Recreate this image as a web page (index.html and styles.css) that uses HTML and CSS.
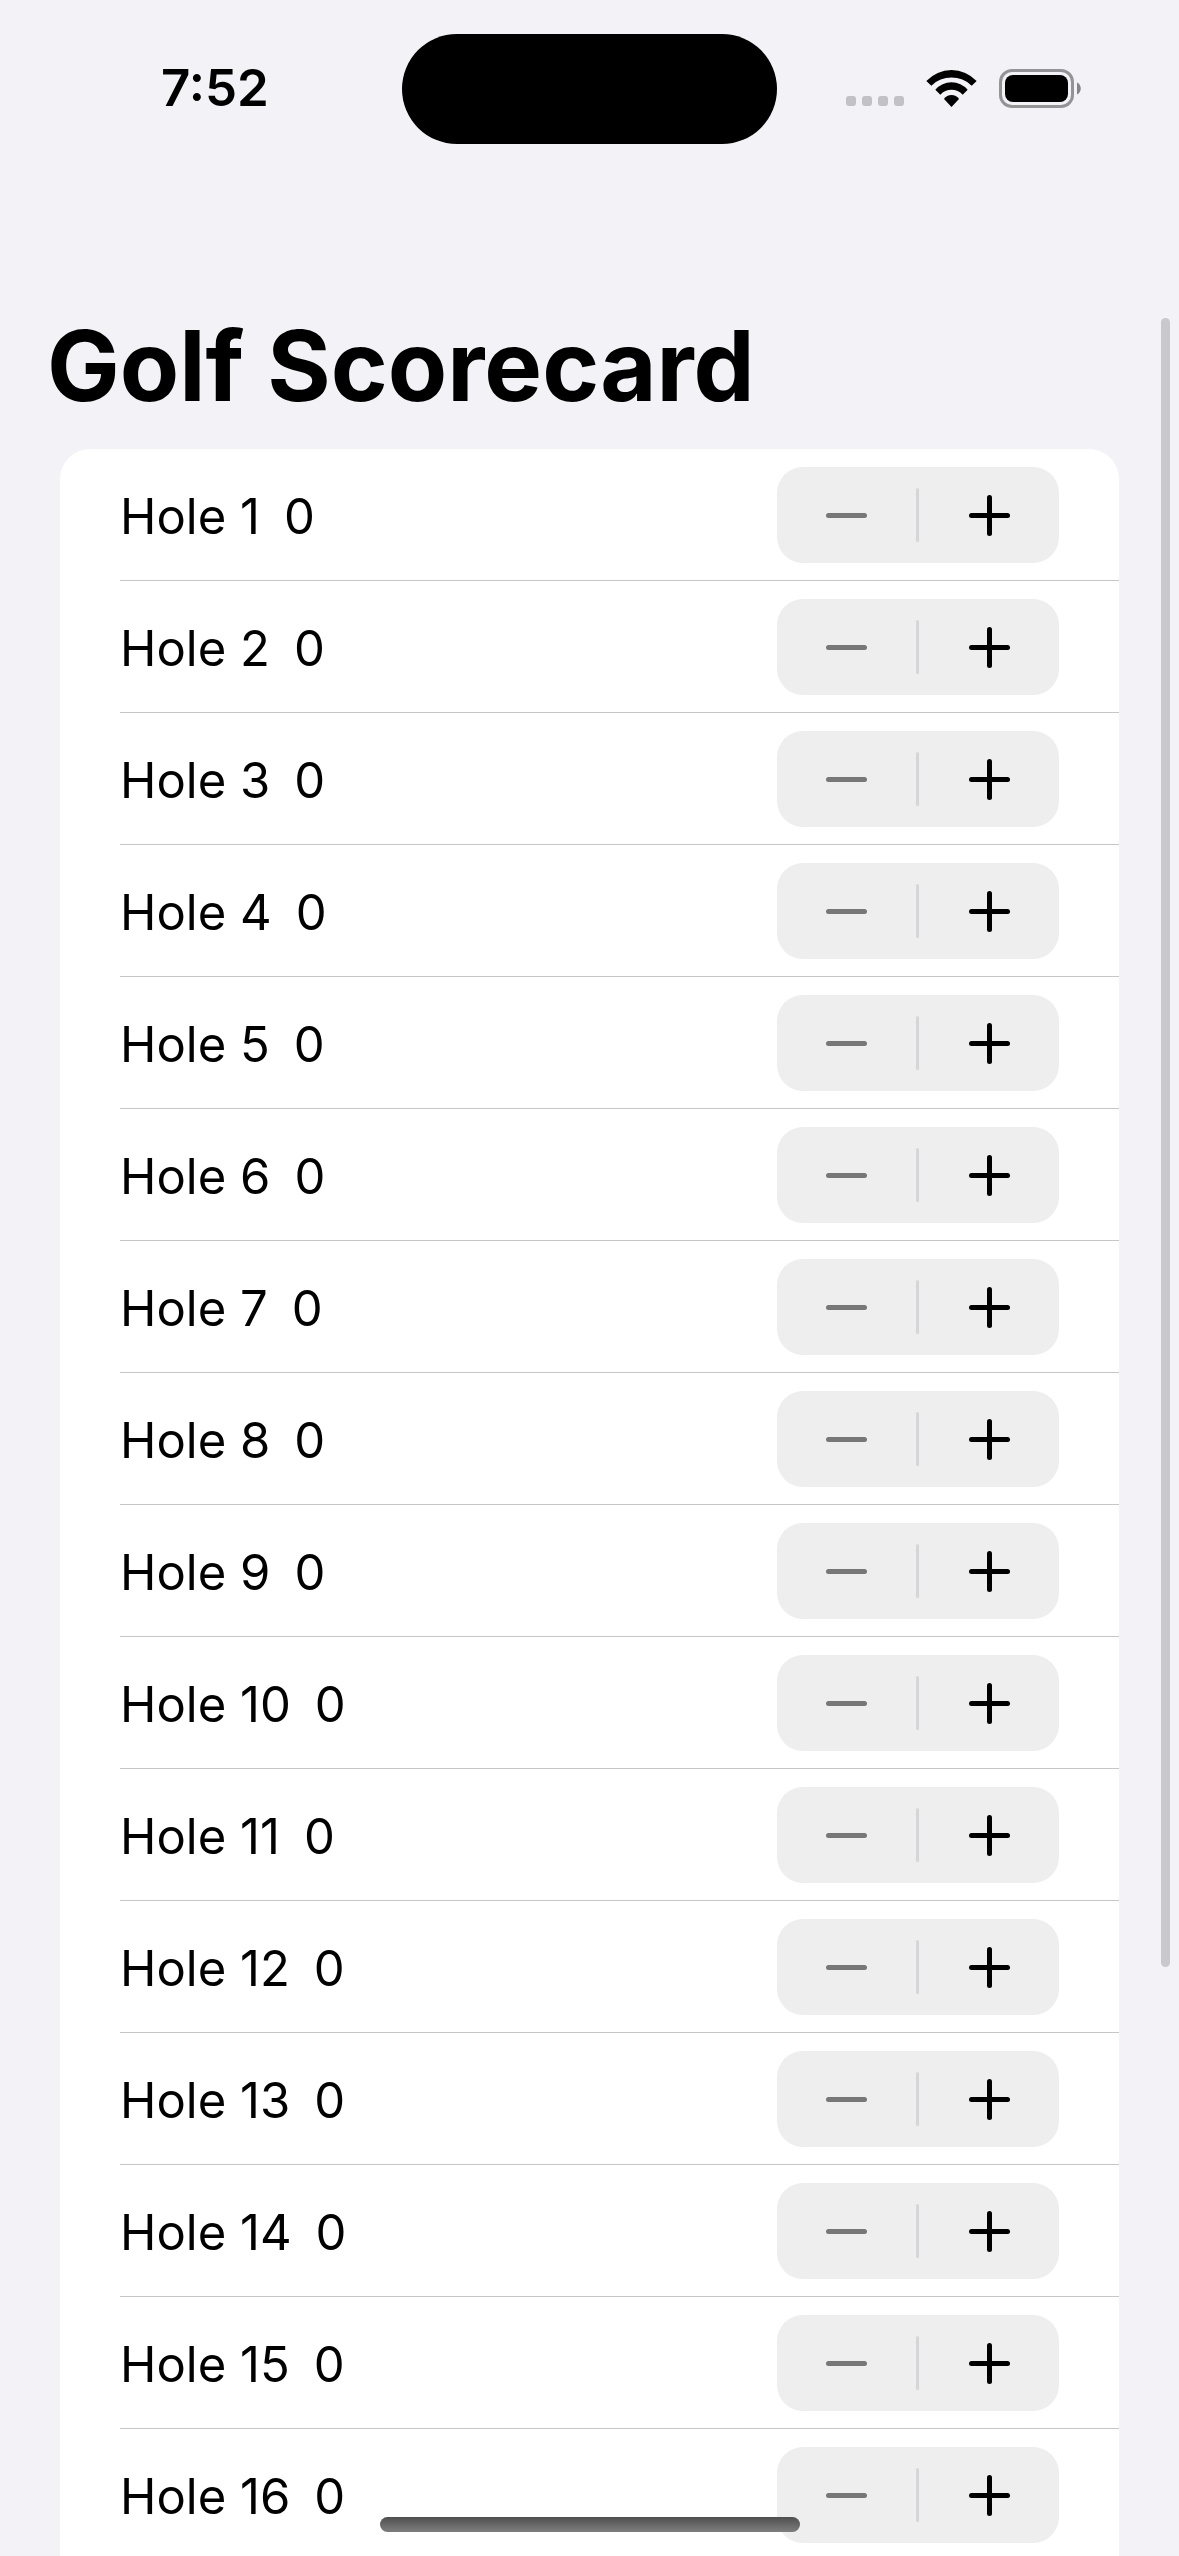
FILE: index.html
```html
<!DOCTYPE html>
<html lang="en">
<head>
<meta charset="utf-8">
<meta name="viewport" content="width=device-width, initial-scale=1">
<title>Golf Scorecard</title>
<link rel="stylesheet" href="styles.css">
</head>
<body>
<div class="app">
  <header class="status">
    <time class="clock">7:52</time>
    <div class="island"></div>
    <div class="indicators">
      <div class="signal"><i></i><i></i><i></i><i></i></div>
      <svg class="wifi" viewBox="0 0 151 111" aria-hidden="true">
        <path d="M0 33A103 103 0 0 1 151 33L136 47A87 87 0 0 0 15 47Z"/>
        <path d="M27 59A64 64 0 0 1 124 59L109 74A45 45 0 0 0 42 74Z"/>
        <path d="M53 87A27 27 0 0 1 98 87L75.500 111Z"/>
      </svg>
      <svg class="battery" viewBox="0 0 82 39" aria-hidden="true">
        <rect x="1.500" y="1.500" width="72" height="36" rx="11.500" fill="none" stroke="#949496" stroke-width="3"/>
        <rect x="6" y="6" width="63" height="27" rx="8"/>
        <path d="M78 13.500C83 15.500 83 23.500 78 25.500Z" fill="#858587"/>
      </svg>
    </div>
  </header>
  <main class="content">
    <h1 class="title">Golf Scorecard</h1>
    <ul class="card">
      <li class="row"><span class="hole">Hole 1</span><output class="score">0</output><div class="stepper"><button class="step minus" aria-label="Decrement hole 1" disabled></button><button class="step plus" aria-label="Increment hole 1"></button></div></li>
      <li class="row"><span class="hole">Hole 2</span><output class="score">0</output><div class="stepper"><button class="step minus" aria-label="Decrement hole 2" disabled></button><button class="step plus" aria-label="Increment hole 2"></button></div></li>
      <li class="row"><span class="hole">Hole 3</span><output class="score">0</output><div class="stepper"><button class="step minus" aria-label="Decrement hole 3" disabled></button><button class="step plus" aria-label="Increment hole 3"></button></div></li>
      <li class="row"><span class="hole">Hole 4</span><output class="score">0</output><div class="stepper"><button class="step minus" aria-label="Decrement hole 4" disabled></button><button class="step plus" aria-label="Increment hole 4"></button></div></li>
      <li class="row"><span class="hole">Hole 5</span><output class="score">0</output><div class="stepper"><button class="step minus" aria-label="Decrement hole 5" disabled></button><button class="step plus" aria-label="Increment hole 5"></button></div></li>
      <li class="row"><span class="hole">Hole 6</span><output class="score">0</output><div class="stepper"><button class="step minus" aria-label="Decrement hole 6" disabled></button><button class="step plus" aria-label="Increment hole 6"></button></div></li>
      <li class="row"><span class="hole">Hole 7</span><output class="score">0</output><div class="stepper"><button class="step minus" aria-label="Decrement hole 7" disabled></button><button class="step plus" aria-label="Increment hole 7"></button></div></li>
      <li class="row"><span class="hole">Hole 8</span><output class="score">0</output><div class="stepper"><button class="step minus" aria-label="Decrement hole 8" disabled></button><button class="step plus" aria-label="Increment hole 8"></button></div></li>
      <li class="row"><span class="hole">Hole 9</span><output class="score">0</output><div class="stepper"><button class="step minus" aria-label="Decrement hole 9" disabled></button><button class="step plus" aria-label="Increment hole 9"></button></div></li>
      <li class="row"><span class="hole">Hole 10</span><output class="score">0</output><div class="stepper"><button class="step minus" aria-label="Decrement hole 10" disabled></button><button class="step plus" aria-label="Increment hole 10"></button></div></li>
      <li class="row"><span class="hole">Hole 11</span><output class="score">0</output><div class="stepper"><button class="step minus" aria-label="Decrement hole 11" disabled></button><button class="step plus" aria-label="Increment hole 11"></button></div></li>
      <li class="row"><span class="hole">Hole 12</span><output class="score">0</output><div class="stepper"><button class="step minus" aria-label="Decrement hole 12" disabled></button><button class="step plus" aria-label="Increment hole 12"></button></div></li>
      <li class="row"><span class="hole">Hole 13</span><output class="score">0</output><div class="stepper"><button class="step minus" aria-label="Decrement hole 13" disabled></button><button class="step plus" aria-label="Increment hole 13"></button></div></li>
      <li class="row"><span class="hole">Hole 14</span><output class="score">0</output><div class="stepper"><button class="step minus" aria-label="Decrement hole 14" disabled></button><button class="step plus" aria-label="Increment hole 14"></button></div></li>
      <li class="row"><span class="hole">Hole 15</span><output class="score">0</output><div class="stepper"><button class="step minus" aria-label="Decrement hole 15" disabled></button><button class="step plus" aria-label="Increment hole 15"></button></div></li>
      <li class="row"><span class="hole">Hole 16</span><output class="score">0</output><div class="stepper"><button class="step minus" aria-label="Decrement hole 16" disabled></button><button class="step plus" aria-label="Increment hole 16"></button></div></li>
    </ul>
  </main>
  <div class="scrollbar"></div>
  <div class="home-bar"></div>
</div>
</body>
</html>
```
FILE: styles.css
```css
* {
  box-sizing: border-box;
}

body {
  margin: 0;
  background: #f2f2f7;
  color: #000;
  font-family: Inter, "Liberation Sans", sans-serif;
  font-size: 49px;
}

.app {
  position: relative;
  height: 100vh;
  overflow: hidden;
}

/* Status bar */
.status {
  display: grid;
  grid-template-columns: 1fr 375px 1fr;
  align-items: center;
  padding-top: 34px;
}

.clock {
  padding: 0 0 2px 161px;
  font-size: 51px;
  font-weight: 600;
  line-height: 60px;
}

.island {
  height: 110px;
  border-radius: 55px;
  background: #000;
}

.indicators {
  display: flex;
  justify-content: flex-end;
  align-items: center;
  gap: 22px;
  padding: 0 98px 2px 0;
}

.signal {
  display: flex;
  align-self: flex-end;
  gap: 6px;
  padding-bottom: 2px;
}

.signal i {
  width: 10px;
  height: 10px;
  border-radius: 3px;
  background: #c2c1c6;
}

.wifi {
  width: 51px;
  height: 37px;
}

.battery {
  width: 82px;
  height: 39px;
}

/* Scorecard */
.title {
  margin: 0;
  padding: 164px 47px 25px;
  font-size: 97px;
  font-weight: 700;
  line-height: 116px;
}

.card {
  margin: 0 60px;
  padding: 0 0 0 60px;
  border-radius: 30px 30px 0 0;
  background: #fff;
  list-style: none;
}

.row {
  display: flex;
  align-items: center;
  gap: 24px;
  height: 132px;
  padding: 1px 60px 0 0;
  border-bottom: 1px solid #c6c6c8;
}

.hole,
.score {
  padding-top: 4px;
  line-height: 60px;
}

.stepper {
  display: flex;
  align-items: center;
  width: 282px;
  height: 96px;
  margin-left: auto;
  border-radius: 26px;
  background: #eeeeee;
}

.stepper::before {
  content: "";
  order: 1;
  width: 3px;
  height: 54px;
  border-radius: 2px;
  background: #d6d6d8;
}

.step {
  display: grid;
  place-items: center;
  height: 100%;
  padding: 0;
  border: 0;
  background: none;
  color: #000;
}

.step:disabled {
  color: #777777;
}

.minus {
  width: 139px;
}

.plus {
  order: 2;
  width: 140px;
}

.step::before,
.plus::after {
  content: "";
  grid-area: 1 / 1;
  width: 41px;
  height: 5px;
  border-radius: 3px;
  background: currentColor;
}

.plus::after {
  width: 5px;
  height: 41px;
}

/* Overlays */
.scrollbar {
  position: absolute;
  top: 318px;
  right: 9px;
  width: 9px;
  height: 1649px;
  border-radius: 5px;
  background: #c9c8cd;
}

.home-bar {
  position: absolute;
  bottom: 24px;
  left: 50%;
  width: 420px;
  height: 15px;
  margin-left: -210px;
  border-radius: 8px;
  background: linear-gradient(#4f4f4f, #7e7e7e);
}
```
